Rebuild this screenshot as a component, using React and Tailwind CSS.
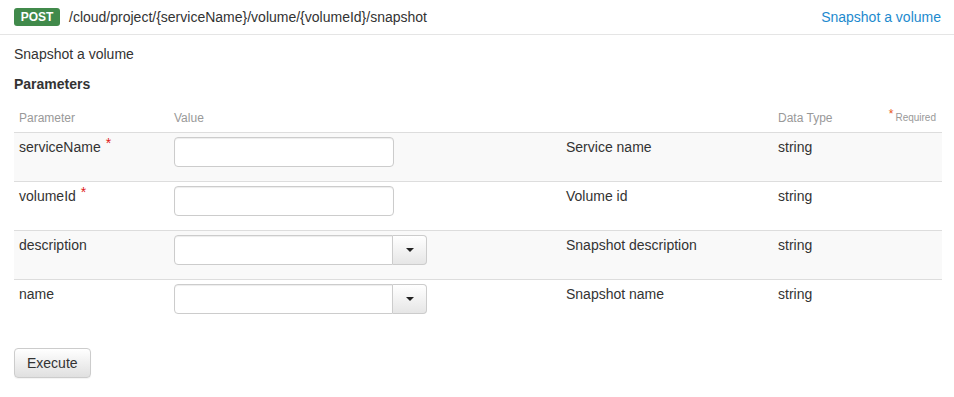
import React from "react";

const params = [
  { name: "serviceName", required: true, kind: "input", desc: "Service name", type: "string" },
  { name: "volumeId", required: true, kind: "input", desc: "Volume id", type: "string" },
  { name: "description", required: false, kind: "select", desc: "Snapshot description", type: "string" },
  { name: "name", required: false, kind: "select", desc: "Snapshot name", type: "string" },
];

const ValueField = ({ kind }) => {
  if (kind === "input") {
    return (
      <input
        type="text"
        className="h-[30px] w-[220px] rounded-[4px] border border-[#ccc] bg-white px-2 text-[14px] shadow-[inset_0_1px_1px_rgba(0,0,0,0.075)] outline-none"
      />
    );
  }
  return (
    <div className="flex h-[30px] w-[253px]">
      <input
        type="text"
        className="h-full w-[219px] rounded-l-[4px] border border-[#ccc] bg-white px-2 text-[14px] shadow-[inset_0_1px_1px_rgba(0,0,0,0.075)] outline-none"
      />
      <button className="flex h-full w-[34px] items-center justify-center rounded-r-[4px] border border-l-0 border-[#ccc] bg-gradient-to-b from-white to-[#e6e6e6]">
        <span className="h-0 w-0 border-x-[4px] border-t-[4px] border-x-transparent border-t-[#222]"></span>
      </button>
    </div>
  );
};

export default function App() {
  return (
    <div className="min-h-[397px] w-[954px] bg-white text-[14px] text-[#333]" style={{ fontFamily: '"Liberation Sans", Arial, sans-serif' }}>
      <div className="flex h-[35px] items-center justify-between border-b border-[#e5e5e5] px-[14px]">
        <div className="flex items-center">
          <span className="flex h-[18px] w-[46px] items-center justify-center rounded-[3px] bg-[#418a4b] text-[12px] font-bold leading-none text-white">
            POST
          </span>
          <span className="ml-[9px] leading-5">/cloud/project/&#123;serviceName&#125;/volume/&#123;volumeId&#125;/snapshot</span>
        </div>
        <a className="mr-[-1px] leading-5 text-[#1d8ace]">Snapshot a volume</a>
      </div>

      <div className="px-[14px]">
        <p className="mt-[9px] leading-5">Snapshot a volume</p>
        <h4 className="mt-[10px] font-bold leading-5">Parameters</h4>

        <div className="mt-[9px] w-[928px]">
          <div className="flex h-[29px] items-center text-[12px] leading-4 text-[#999]">
            <div className="w-[155px] pl-[5px]">Parameter</div>
            <div className="w-[392px] pl-[5px]">Value</div>
            <div className="w-[212px] pl-[5px]"></div>
            <div className="w-[110px] pl-[5px]">Data Type</div>
            <div className="flex-1 pr-[6px] text-right text-[10px]">
              <span className="relative top-[-3px] mr-[2px] text-[12px] text-[#e8571b]">*</span>
              Required
            </div>
          </div>

          {params.map((p, i) => (
            <div
              key={p.name}
              className={`flex h-[49px] items-start border-t border-[#ddd] pt-[4px] ${i % 2 === 0 ? "bg-[#f9f9f9]" : "bg-white"}`}
            >
              <div className="w-[155px] pl-[5px] leading-5">
                {p.name}
                {p.required && <span className="relative top-[-4px] ml-[5px] text-[#e01b1b]">*</span>}
              </div>
              <div className="w-[392px] pl-[5px]">
                <ValueField kind={p.kind} />
              </div>
              <div className="w-[212px] pl-[5px] leading-5">{p.desc}</div>
              <div className="flex-1 pl-[5px] leading-5">{p.type}</div>
            </div>
          ))}
        </div>

        <button className="mt-[20px] h-[30px] rounded-[4px] border border-[#ccc] bg-gradient-to-b from-white to-[#e0e0e0] px-[12px] leading-5 text-[#333] shadow-[0_1px_1px_rgba(0,0,0,0.05)]">
          Execute
        </button>
      </div>
    </div>
  );
}
